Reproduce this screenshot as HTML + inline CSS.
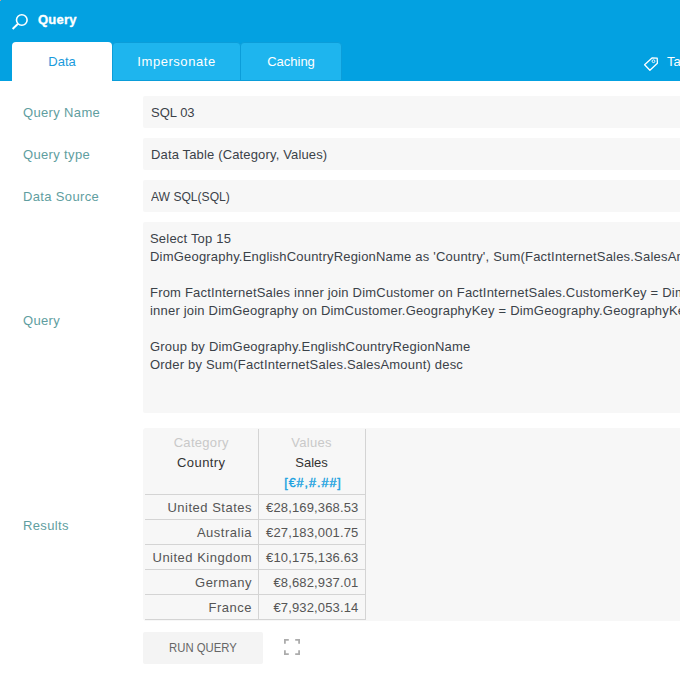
<!DOCTYPE html>
<html><head><meta charset="utf-8">
<style>
*{box-sizing:border-box;margin:0;padding:0}
html,body{width:680px;height:680px;overflow:hidden;background:#fff;font-family:"Liberation Sans",sans-serif;}
.abs{position:absolute;white-space:nowrap}
#hdr{position:absolute;left:0;top:0;width:680px;height:81px;background:#03a1e1}
.tab{position:absolute;top:42px;height:39px;border-radius:4px 4px 0 0;font-size:13px;text-align:center;line-height:38px}
#t1{left:12px;width:100px;background:#fff;color:#1a9bdc;top:42px;height:39px;padding-top:1px}
#t2{left:112px;width:129px;background:#1eb5ee;color:#fff;border:1px solid #0b9dd9;border-bottom:1px solid #0b9dd9;top:42px}
#t3{left:240px;width:102px;background:#1eb5ee;color:#fff;border:1px solid #0b9dd9;top:42px}
.lbl{position:absolute;left:23px;font-size:13px;color:#5f9ea0;white-space:nowrap;letter-spacing:0.35px}
.fld{position:absolute;left:143px;width:560px;background:#f7f7f7;border-radius:2px}
.ftx{position:absolute;left:151px;font-size:13px;color:#3b4249;white-space:nowrap}
.q{position:absolute;left:150px;font-size:13px;color:#3b4249;white-space:nowrap;line-height:18px;letter-spacing:0.2px}
table{position:absolute;left:145px;top:429px;border-collapse:collapse;font-size:13px}
td{border-right:1px solid #d4d4d4;border-bottom:1px solid #d4d4d4;text-align:right;color:#555;height:25px;padding:0 7px 0 6px}
tr.r td{padding:2px 6px 0 6px;letter-spacing:0.15px}
tr.r td:first-child{letter-spacing:0.5px;padding-right:5.5px}
</style></head><body>
<div id="hdr"></div>
<div style="position:absolute;left:0;top:0;width:1px;height:1px;background:#c8a08e"></div>
<svg class="abs" style="left:0;top:0" width="40" height="40">
  <circle cx="21.8" cy="20" r="5.3" fill="none" stroke="#fff" stroke-width="1.6"/>
  <line x1="18" y1="23.8" x2="12.6" y2="28.9" stroke="#fff" stroke-width="2"/>
</svg>
<div id="hq" class="abs" style="left:38px;top:12px;font-size:13px;font-weight:bold;color:#fff;letter-spacing:0.25px;-webkit-text-stroke:0.35px #fff">Query</div>
<div id="t1" class="tab">Data</div>
<div id="t2" class="tab" style="letter-spacing:0.55px">Impersonate</div>
<div id="t3" class="tab">Caching</div>
<svg class="abs" style="left:636px;top:48px" width="30" height="30">
  <path d="M8.6 16.7 L16 9.9 L21.2 10.1 L21.4 15.2 L13.9 22.3 Z" fill="none" stroke="#fff" stroke-width="1.3" stroke-linejoin="round"/>
  <circle cx="17.5" cy="13.2" r="1.4" fill="none" stroke="#fff" stroke-width="0.9"/>
</svg>
<div id="hta" class="abs" style="left:667px;top:54px;font-size:13px;color:#fff">Tags</div>

<div id="l1" class="lbl" style="top:105px">Query Name</div>
<div id="l2" class="lbl" style="top:147px">Query type</div>
<div id="l3" class="lbl" style="top:189px">Data Source</div>
<div id="l4" class="lbl" style="top:313px">Query</div>
<div id="l5" class="lbl" style="top:518px">Results</div>

<div class="fld" style="top:96px;height:32px"></div>
<div class="fld" style="top:138px;height:32px"></div>
<div class="fld" style="top:180px;height:32px"></div>
<div class="fld" style="top:222px;height:191px"></div>
<div class="fld" style="top:428px;height:193px;border-radius:3px"></div>

<div id="f1" class="ftx" style="top:105px">SQL 03</div>
<div id="f2" class="ftx" style="top:147px;letter-spacing:0.15px">Data Table (Category, Values)</div>
<div id="f3" class="ftx" style="top:189px;transform:scaleX(0.93);transform-origin:0 0">AW SQL(SQL)</div>

<div id="q1" class="q" style="top:230px">Select Top 15<br>DimGeography.EnglishCountryRegionName as 'Country', Sum(FactInternetSales.SalesAmount) as 'Sales'<br>&nbsp;<br>From FactInternetSales inner join DimCustomer on FactInternetSales.CustomerKey = DimCustomer.CustomerKey<br>inner join DimGeography on DimCustomer.GeographyKey = DimGeography.GeographyKey<br>&nbsp;<br>Group by DimGeography.EnglishCountryRegionName<br>Order by Sum(FactInternetSales.SalesAmount) desc</div>

<table>
<tr><td id="h1" style="width:113px;height:65px;text-align:center;line-height:20px;vertical-align:top;padding:4px 0 0 0"><span style="color:#c9c9c9;letter-spacing:0.3px">Category</span><br><span style="color:#333;letter-spacing:0.4px">Country</span></td>
<td id="h2" style="width:107px;height:65px;text-align:center;line-height:20px;vertical-align:top;padding:4px 0 0 0"><span style="color:#c9c9c9;letter-spacing:0.3px">Values</span><br><span style="color:#333">Sales</span><br><span style="color:#1ba2e0;font-size:12.5px;-webkit-text-stroke:0.4px #1ba2e0;letter-spacing:1px;position:relative;left:1.5px">[€#,#.##]</span></td></tr>
<tr class="r"><td>United States</td><td>€28,169,368.53</td></tr>
<tr class="r"><td>Australia</td><td>€27,183,001.75</td></tr>
<tr class="r"><td>United Kingdom</td><td>€10,175,136.63</td></tr>
<tr class="r"><td>Germany</td><td>€8,682,937.01</td></tr>
<tr class="r"><td>France</td><td>€7,932,053.14</td></tr>
</table>

<div id="btn" class="abs" style="left:143px;top:632px;width:120px;height:32px;background:#f4f4f4;border-radius:2px;font-size:13px;color:#666;text-align:center;line-height:31px"><span style="display:inline-block;transform:scaleX(0.87)">RUN QUERY</span></div>
<svg class="abs" style="left:284px;top:639px" width="16" height="16">
  <path d="M0.9 4.8 V0.9 H4.8 M11.2 0.9 H15.1 V4.8 M15.1 11.2 V15.1 H11.2 M4.8 15.1 H0.9 V11.2" fill="none" stroke="#acacac" stroke-width="1.8"/>
</svg>
</body></html>
